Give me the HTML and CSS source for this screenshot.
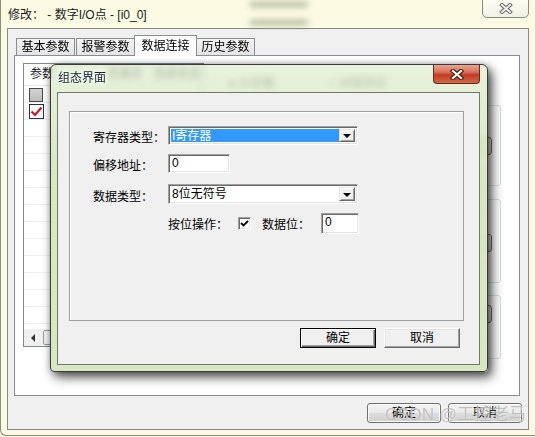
FILE: index.html
```html
<!DOCTYPE html>
<html lang="zh-CN">
<head>
    <meta charset="UTF-8">
    <title>修改 - 数字I/O点</title>
    <link rel="stylesheet" href="styles.css">
</head>
<body>
<div class="window">
    <!-- blurred desktop seen through the glass caption -->
    <span class="smudge smudge-a"></span>
    <span class="smudge smudge-b"></span>

    <div class="titlebar">修改： - 数字I/O点 - [i0_0]</div>
    <div class="win-close">
        <svg width="14" height="11" viewBox="0 0 14 11">
            <path d="M3 2 L11 9 M11 2 L3 9" stroke="#6b6b6b" stroke-width="4" stroke-linecap="square"/>
            <path d="M3 2 L11 9 M11 2 L3 9" stroke="#eeeeee" stroke-width="2" stroke-linecap="square"/>
        </svg>
    </div>

    <!-- main property sheet -->
    <div class="client">
        <div class="tabs">
            <div class="tab">基本参数</div>
            <div class="tab">报警参数</div>
            <div class="tab active">数据连接</div>
            <div class="tab">历史参数</div>
        </div>
        <div class="panel">
            <div class="list">
                <div class="list-head">
                    <span class="col-a">参数</span>
                    <span class="col-b">变量名</span>
                    <span class="col-c">连接状态</span>
                </div>
                <div class="list-rows">
                    <div class="row"><span class="box box-off"></span></div>
                    <div class="row">
                        <span class="box box-on">
                            <svg width="15" height="15" viewBox="0 0 15 15"><path d="M2.5 7.5 L6 11 L12.5 3.5" fill="none" stroke="#cc1131" stroke-width="2.2"/></svg>
                        </span>
                    </div>
                    <div class="row"></div>
                    <div class="row"></div>
                    <div class="row"></div>
                    <div class="row"></div>
                    <div class="row"></div>
                    <div class="row"></div>
                    <div class="row"></div>
                    <div class="row"></div>
                    <div class="row"></div>
                    <div class="row"></div>
                    <div class="row"></div>
                    <div class="row"></div>
                </div>
                <div class="hscroll"><span class="arrow"></span><span class="thumb"></span></div>
            </div>
            <div class="side">
                <div class="radios"><span>● 从设备</span><span>○ 对组协议</span></div>
                <div class="gbox g1"><span class="mini">选择</span></div>
                <div class="gbox g2"><span class="mini">选择</span></div>
                <div class="gbox g3"><span class="mini">选择</span></div>
            </div>
        </div>
        <div class="actions">
            <button class="btn7">确定</button>
            <button class="btn7">取消</button>
        </div>
    </div>

    <div class="watermark">CSDN @工控老马</div>

    <!-- modal dialog on top -->
    <div class="dialog">
        <div class="dlg-title">组态界面</div>
        <div class="dlg-close">
            <svg width="14" height="11" viewBox="0 0 14 11">
                <path d="M3 2 L11 9 M11 2 L3 9" stroke="#4a1a10" stroke-width="4.4" stroke-linecap="square"/>
                <path d="M3 2 L11 9 M11 2 L3 9" stroke="#ffffff" stroke-width="2.2" stroke-linecap="square"/>
            </svg>
        </div>
        <div class="dlg-client">
            <div class="group">
                <div class="form-row r1">
                    <span class="lbl">寄存器类型：</span>
                    <div class="combo"><span class="combo-val selected">I寄存器</span><span class="drop"></span></div>
                </div>
                <div class="form-row r2">
                    <span class="lbl">偏移地址：</span>
                    <div class="field offset">0</div>
                </div>
                <div class="form-row r3">
                    <span class="lbl">数据类型：</span>
                    <div class="combo"><span class="combo-val">8位无符号</span><span class="drop"></span></div>
                </div>
                <div class="form-row r4">
                    <span class="bit-lbl">按位操作：</span>
                    <span class="check">
                        <svg width="11" height="11" viewBox="0 0 11 11"><path d="M2 5 L4.5 7.5 L9 3" fill="none" stroke="#000" stroke-width="1.8"/></svg>
                    </span>
                    <span class="bit-lbl2">数据位：</span>
                    <div class="field bitno">0</div>
                </div>
            </div>
            <div class="dlg-actions">
                <button class="btn default">确定</button>
                <button class="btn">取消</button>
            </div>
        </div>
    </div>
</div>
</body>
</html>
```

FILE: styles.css
```css
/* General page styling */
* {
    box-sizing: border-box;
}

body {
    margin: 0;
    overflow: hidden;
    background: #fbfbe4;
    font-family: "Liberation Sans", "Noto Sans CJK SC", sans-serif;
    font-size: 12px;
    color: #000;
}

button {
    font: inherit;
    color: #000;
    padding: 0;
}

/* Outer window */
.window {
    position: relative;
    width: 540px;
    height: 436px;
    background: #fbfbe4;
    border-left: 1px solid #8d8d80;
    border-bottom: 1px solid #8d8d80;
    border-bottom-left-radius: 6px;
    display: flex;
    flex-direction: column;
}

.smudge {
    position: absolute;
    left: 249px;
    width: 58px;
    height: 5px;
    background: rgba(95, 110, 80, 0.5);
    filter: blur(3px);
}

.smudge-a { top: 2px; }
.smudge-b { top: 20px; }

.titlebar {
    height: 28px;
    padding: 8px 0 0 7px;
    line-height: 14px;
    color: #1b1b1b;
}

.win-close {
    position: absolute;
    top: -1px;
    left: 481px;
    width: 47px;
    height: 19px;
    border: 1px solid #8a8a84;
    border-radius: 0 0 5px 5px;
    background: linear-gradient(#fdfdf2, #f1f1e4);
    display: flex;
    align-items: center;
    justify-content: center;
}

/* Property sheet */
.client {
    margin-left: 6px;
    width: 522px;
    height: 402px;
    border: 1px solid #898989;
    background: #f0f0f0;
    padding: 6px 8px 6px 6px;
    display: flex;
    flex-direction: column;
}

.tabs {
    position: relative;
    z-index: 1;
    height: 20px;
    padding-left: 2px;
    display: flex;
    align-items: flex-end;
}

.tab {
    position: relative;
    width: 59px;
    height: 17px;
    margin-right: 1px;
    border: 1px solid #898c95;
    border-bottom: none;
    background: linear-gradient(#f4f4f4, #e4e4e4);
    text-align: center;
    line-height: 16px;
}

.tab.active {
    z-index: 2;
    width: 63px;
    height: 21px;
    margin: 0 -1px -1px -2px;
    background: #fff;
    line-height: 20px;
}

.panel {
    height: 341px;
    border: 1px solid #898c95;
    background: #fff;
    padding: 7px 0 0 8px;
    display: flex;
    align-items: flex-start;
}

/* List of parameters */
.list {
    width: 181px;
    height: 284px;
    border: 1px solid #828790;
    display: flex;
    flex-direction: column;
}

.list-head {
    height: 22px;
    border-bottom: 1px solid #e5e5e5;
    padding-left: 6px;
    line-height: 21px;
    display: flex;
    color: #222;
}

.col-b { margin-left: 53px; }
.col-c { margin-left: 10px; }

.list-rows {
    flex: 1;
    overflow: hidden;
}

.row {
    height: 17px;
    border-bottom: 1px solid #efefef;
    padding: 1px 0 0 5px;
}

.box {
    display: block;
    width: 14px;
    height: 14px;
}

.box-off {
    margin-top: 1px;
    border: 1px solid #4a4a4a;
    background: linear-gradient(#d2d2d2, #bdbdbd);
}

.box-on {
    width: 15px;
    height: 15px;
    border: 1px solid #23304f;
    background: #fff;
}

.box-on svg {
    display: block;
    margin: -1px;
}

.hscroll {
    height: 17px;
    background: #f0f0f0;
    display: flex;
    align-items: center;
}

.arrow {
    width: 18px;
    height: 16px;
    display: flex;
    align-items: center;
    justify-content: center;
}

.arrow::after {
    content: "";
    border: 4px solid transparent;
    border-right-color: #333;
    border-left: 0;
}

.thumb {
    width: 110px;
    height: 15px;
    margin-left: 1px;
    border: 1px solid #9a9a9a;
    border-radius: 2px;
    background: linear-gradient(90deg, #f3f3f3, #e2e2e2);
}

/* Connection settings behind the dialog */
.side {
    width: 285px;
    margin-left: 12px;
    padding-top: 14px;
}

.radios {
    height: 12px;
    padding-left: 12px;
    display: flex;
    line-height: 12px;
    color: #333;
}

.radios span { width: 100px; }

.gbox {
    border: 1px solid #d5dfe5;
    border-radius: 3px;
    display: flex;
    justify-content: flex-end;
    align-items: flex-start;
    padding-right: 8px;
}

.g1 { height: 81px; margin-top: 16px; padding-top: 31px; }
.g2 { height: 84px; margin-top: 13px; padding-top: 34px; }
.g3 { height: 64px; margin-top: 12px; padding-top: 9px; }

.mini {
    width: 50px;
    height: 18px;
    border: 1px solid #707070;
    border-radius: 3px;
    background: linear-gradient(#f2f2f2, #dddddd);
    text-align: center;
    line-height: 16px;
}

/* Bottom buttons of the window */
.actions {
    margin: 7px -2px 0 0;
    display: flex;
    justify-content: flex-end;
    gap: 7px;
}

.btn7 {
    width: 74px;
    height: 20px;
    border: 1px solid #707070;
    border-radius: 3px;
    background: linear-gradient(#f2f2f2 0%, #ebebeb 50%, #dddddd 51%, #cfcfcf 100%);
    box-shadow: inset 0 0 0 1px #fbfbfb;
    line-height: 18px;
}

.watermark {
    position: absolute;
    left: 384px;
    top: 404px;
    font-size: 17px;
    line-height: 22px;
    color: rgba(150, 150, 150, 0.6);
    text-shadow: 0 0 1px #fff;
    letter-spacing: 0.3px;
}

/* Dialog */
.dialog {
    position: absolute;
    left: 49px;
    top: 64px;
    width: 438px;
    height: 308px;
    border: 1px solid #3a3a3a;
    border-radius: 6px 6px 4px 4px;
    background: linear-gradient(rgba(224, 237, 208, 0.72), rgba(212, 230, 190, 0.93) 35%, rgba(213, 231, 191, 0.96));
    backdrop-filter: blur(3px);
    box-shadow: 4px 5px 11px rgba(0, 0, 0, 0.7), 0 0 6px rgba(0, 0, 0, 0.25);
    padding: 27px 7px 6px 6px;
}

.dlg-title {
    position: absolute;
    left: 7px;
    top: 6px;
    line-height: 14px;
    color: #10202a;
    text-shadow: 0 0 5px #fff, 0 0 3px #fff;
}

.dlg-close {
    position: absolute;
    top: 0;
    right: 7px;
    width: 47px;
    height: 19px;
    border: 1px solid #6d2a1b;
    border-top: none;
    border-radius: 0 0 4px 4px;
    background: linear-gradient(#e9a592 0%, #d8705a 40%, #c23b1f 55%, #cf6a4c 100%);
    display: flex;
    align-items: center;
    justify-content: center;
}

.dlg-client {
    height: 273px;
    border: 1px solid #6f7a68;
    background: #f0f0f0;
    padding: 18px 0 0 11px;
}

.group {
    width: 395px;
    height: 210px;
    border: 1px solid #a0a0a0;
    box-shadow: inset 1px 1px #fff;
    padding: 14px 0 0 23px;
}

.form-row {
    display: flex;
    align-items: center;
}

.r2 { margin-top: 9px; }
.r3 { margin-top: 11px; }
.r4 { margin-top: 9px; padding-left: 75px; }

.lbl {
    width: 75px;
    padding-top: 2px;
}

/* Classic sunken controls */
.combo,
.field,
.check {
    border: 1px solid;
    border-color: #a0a0a0 #fff #fff #a0a0a0;
    box-shadow: inset 1px 1px #696969, inset -1px -1px #e3e3e3;
    background: #fff;
}

.combo {
    width: 190px;
    height: 19px;
    padding: 2px;
    display: flex;
}

.r3 .combo { height: 20px; }

.combo-val {
    flex: 1;
    padding-left: 1px;
    line-height: 14px;
}

.combo-val.selected {
    background: #3399ff;
    color: #fff;
}

.drop {
    width: 16px;
    background: #f0f0f0;
    border: 1px solid;
    border-color: #e3e3e3 #696969 #696969 #e3e3e3;
    box-shadow: inset 1px 1px #fff, inset -1px -1px #a0a0a0;
    display: flex;
    align-items: center;
    justify-content: center;
}

.drop::after {
    content: "";
    border: 4px solid transparent;
    border-top-color: #000;
    border-bottom: 0;
    margin-top: 1px;
}

.field {
    height: 19px;
    padding: 2px 3px;
    line-height: 13px;
}

.offset { width: 62px; }
.bitno { width: 38px; height: 21px; }

.bit-lbl { width: 70px; }

.check {
    width: 13px;
    height: 13px;
    padding: 0;
    display: flex;
}

.check svg {
    display: block;
}

.bit-lbl2 {
    width: 59px;
    margin-left: 11px;
}

.dlg-actions {
    margin-top: 7px;
    padding-right: 19px;
    display: flex;
    justify-content: flex-end;
    gap: 8px;
}

.btn {
    width: 76px;
    height: 20px;
    background: #f0f0f0;
    border: 1px solid;
    border-color: #fff #696969 #696969 #fff;
    box-shadow: inset -1px -1px #a0a0a0, inset 1px 1px #e3e3e3;
    line-height: 18px;
}

.btn.default {
    border-color: #000;
    box-shadow: inset 1px 1px #fff, inset -1px -1px #696969, inset -2px -2px #a0a0a0;
}
```
